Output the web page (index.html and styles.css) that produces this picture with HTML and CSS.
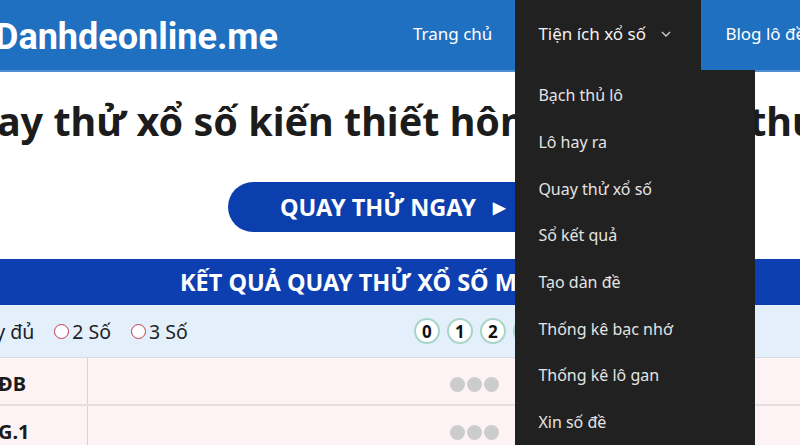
FILE: index.html
```html
<!DOCTYPE html>
<html lang="vi">
<head>
<meta charset="utf-8">
<title>Quay thử xổ số kiến thiết hôm nay</title>
<link rel="stylesheet" href="styles.css">
</head>
<body>
<div class="page">
  <header class="site-header">
    <a class="logo" href="#">Danhdeonline.me</a>
    <nav class="main-nav">
      <a class="nav-item" href="#">Trang chủ</a>
      <div class="nav-item nav-item--open">
        <span>Tiện ích xổ số</span>
        <svg class="chevron" width="10" height="6" viewBox="0 0 10 6"><path d="M1 1l4 4 4-4" fill="none" stroke="#cfcfcf" stroke-width="1.3"/></svg>
        <ul class="dropdown">
          <li>Bạch thủ lô</li>
          <li>Lô hay ra</li>
          <li>Quay thử xổ số</li>
          <li>Sổ kết quả</li>
          <li>Tạo dàn đề</li>
          <li>Thống kê bạc nhớ</li>
          <li>Thống kê lô gan</li>
          <li>Xin số đề</li>
        </ul>
      </div>
      <a class="nav-item" href="#">Blog lô đề</a>
    </nav>
  </header>

  <main class="content">
    <h1 class="page-title">Quay thử xổ số kiến thiết hôm nay: quay thủ công</h1>

    <div class="cta-row">
      <a class="cta" href="#">QUAY THỬ NGAY <span class="cta-arrow">▶</span></a>
    </div>

    <section class="results">
      <div class="results-head">KẾT QUẢ QUAY THỬ XỔ SỐ MIỀN BẮC</div>
      <div class="results-options">
        <label class="opt"><span class="radio"></span>Đầy đủ</label>
        <label class="opt"><span class="radio"></span>2 Số</label>
        <label class="opt"><span class="radio"></span>3 Số</label>
        <div class="digits">
          <span class="digit">0</span><span class="digit">1</span><span class="digit">2</span><span class="digit">3</span><span class="digit">4</span>
        </div>
      </div>
      <div class="results-row">
        <div class="row-label">ĐB</div>
        <div class="row-value"><span class="dot"></span><span class="dot"></span><span class="dot"></span></div>
      </div>
      <div class="results-row">
        <div class="row-label">G.1</div>
        <div class="row-value"><span class="dot"></span><span class="dot"></span><span class="dot"></span></div>
      </div>
    </section>
  </main>
</div>
</body>
</html>
```

FILE: styles.css
```css
* { box-sizing: border-box; }

html, body {
  margin: 0;
  padding: 0;
  overflow: hidden;
  width: 800px;
  height: 445px;
  background: #ffffff;
}

body {
  font-family: "Noto Sans", "Open Sans", sans-serif;
  color: #222;
}

.page {
  width: 1100px;
  margin-left: -60px;
}

/* Header bar */
.site-header {
  height: 72px;
  background: #1f70c1;
  border-bottom: 2px solid #4f8fcf;
  display: flex;
  align-items: stretch;
  position: relative;
  z-index: 5;
}

.logo {
  font-family: Roboto, "Liberation Sans", sans-serif;
  font-weight: 700;
  font-size: 36px;
  color: #fff;
  text-decoration: none;
  display: flex;
  align-items: center;
  padding-left: 55px;
  padding-top: 4px;
  width: 449px;
}

.main-nav {
  display: flex;
  align-items: stretch;
}

.nav-item {
  display: flex;
  align-items: center;
  gap: 15px;
  padding: 0 24px 4px;
  color: #fff;
  text-decoration: none;
  font-size: 17px;
  position: relative;
  height: 70px;
}

.nav-item:first-child { padding-left: 24px; padding-right: 23px; }

.nav-item--open {
  background: #212121;
  color: #f2f2f2;
  width: 186px;
  padding-left: 23px;
}

.chevron { margin-top: 2px; }

.dropdown {
  list-style: none;
  margin: 0;
  padding: 2px 0 0;
  position: absolute;
  top: 70px;
  left: 0;
  width: 240px;
  height: 400px;
  background: #212121;
}

.dropdown li {
  height: 46.7px;
  display: flex;
  align-items: center;
  padding-left: 23px;
  font-size: 16px;
  color: #e4e4e4;
}

/* Main content */
.content {
  background: #fff;
}

.page-title {
  margin: 0;
  padding: 22px 0 0;
  height: 110px;
  font-size: 39.5px;
  font-weight: 700;
  color: #1c1c1c;
  white-space: nowrap;
}

.cta-row {
  padding-left: 288px;
  height: 77px;
}

.cta {
  display: inline-flex;
  align-items: center;
  gap: 17px;
  width: 330px;
  height: 50px;
  padding-left: 52px;
  border-radius: 25px;
  background: #0c3fae;
  color: #fff;
  text-decoration: none;
  font-weight: 700;
  font-size: 23.5px;
}

.cta-arrow { font-size: 16px; }

.results-head {
  height: 46px;
  background: #0e3fb0;
  color: #fff;
  font-weight: 700;
  font-size: 23.5px;
  display: flex;
  align-items: center;
  padding-left: 240px;
}

.results-options {
  height: 53px;
  background: #e3effb;
  border-bottom: 1px solid #d3dbe3;
  display: flex;
  align-items: center;
  font-size: 19.5px;
  padding-left: 12px;
}

.opt {
  display: flex;
  align-items: center;
  gap: 3px;
  margin-right: 20px;
}

.radio {
  width: 15px;
  height: 15px;
  border: 1.6px solid #c23a4e;
  border-radius: 50%;
  background: #fff;
}

.digits {
  display: flex;
  gap: 7px;
  margin-left: 206px;
}

.digit {
  width: 26px;
  height: 26px;
  border: 2px solid #a7d5c7;
  border-radius: 50%;
  background: #fff;
  display: flex;
  align-items: center;
  justify-content: center;
  font-weight: 700;
  font-size: 17px;
  color: #111;
}

.results-row {
  height: 48px;
  display: flex;
  background: #fdf3f4;
  border-bottom: 2px solid #e6dfe0;
}

.row-label {
  width: 148px;
  border-right: 1px solid #d9d3d4;
  display: flex;
  align-items: center;
  padding: 4px 0 0 58px;
  font-weight: 700;
  font-size: 20px;
  color: #1b1b1b;
}

.row-value {
  display: flex;
  align-items: center;
  gap: 2px;
  padding: 6px 0 0 362px;
}

.dot {
  width: 15px;
  height: 15px;
  border-radius: 50%;
  background: #cccccc;
}
```
